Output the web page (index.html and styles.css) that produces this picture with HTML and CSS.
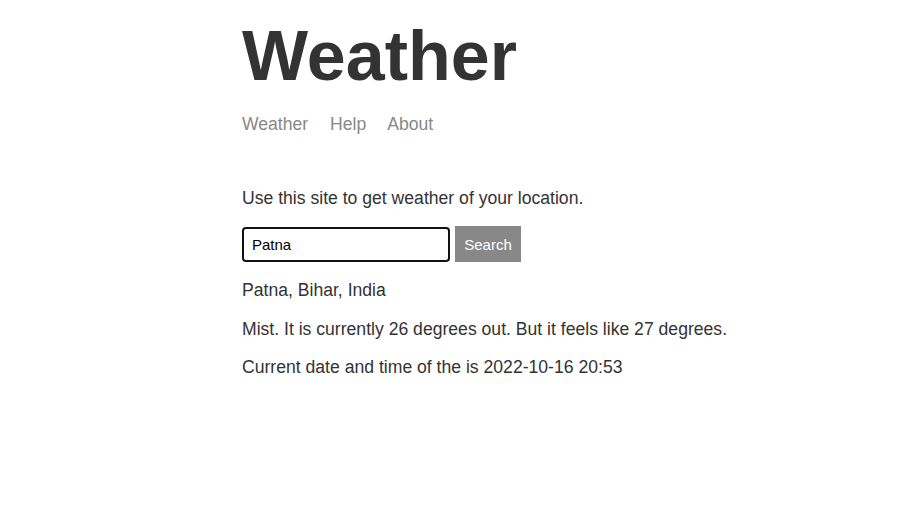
FILE: index.html
```html
<!DOCTYPE html>
<html>
<head>
<meta charset="utf-8">
<title>Weather</title>
<link rel="stylesheet" href="styles.css">
</head>
<body>
<div class="page">
  <header class="header">
    <h1 class="title">Weather</h1>
    <nav class="nav">
      <a class="nav-link" href="#">Weather</a>
      <a class="nav-link" href="#">Help</a>
      <a class="nav-link" href="#">About</a>
    </nav>
  </header>
  <main class="main">
    <p class="intro">Use this site to get weather of your location.</p>
    <form class="search">
      <input class="search-input" type="text" value="Patna">
      <button class="search-btn" type="button">Search</button>
    </form>
    <p class="line first">Patna, Bihar, India</p>
    <p class="line">Mist. It is currently 26 degrees out. But it feels like 27 degrees.</p>
    <p class="line">Current date and time of the is 2022-10-16 20:53</p>
  </main>
</div>
</body>
</html>
```
FILE: styles.css
```css
html, body {
  margin: 0;
  padding: 0;
  background: #fff;
}
.page {
  font-family: "Liberation Sans", Arial, sans-serif;
  color: #333;
  padding: 0 16px 0 242px;
}
.header {
  padding-top: 16px;
}
.title {
  margin: 0;
  font-size: 70px;
  line-height: 80px;
  font-weight: bold;
}
.nav {
  margin-top: 17px;
  font-size: 17.6px;
  line-height: 22px;
}
.nav-link {
  color: #888;
  text-decoration: none;
  margin-right: 17px;
}
.main {
  margin-top: 52px;
}
.intro {
  margin: 0;
  font-size: 17.6px;
  line-height: 22px;
}
.search {
  margin: 17px 0 0;
  display: flex;
  gap: 5px;
  align-items: center;
}
.search-input {
  box-sizing: border-box;
  width: 208px;
  height: 35px;
  border: 2px solid #111;
  border-radius: 4px;
  padding: 0 8px;
  font-family: "Liberation Sans", Arial, sans-serif;
  font-size: 15px;
  color: #000;
  outline: none;
}
.search-btn {
  box-sizing: border-box;
  width: 66px;
  height: 36px;
  border: none;
  background: #888;
  color: #fff;
  font-family: "Liberation Sans", Arial, sans-serif;
  font-size: 15px;
  padding: 0;
}
.line {
  margin: 17.5px 0 0;
  font-size: 17.6px;
  line-height: 21px;
}
.line.first {
  margin-top: 18px;
}
```
